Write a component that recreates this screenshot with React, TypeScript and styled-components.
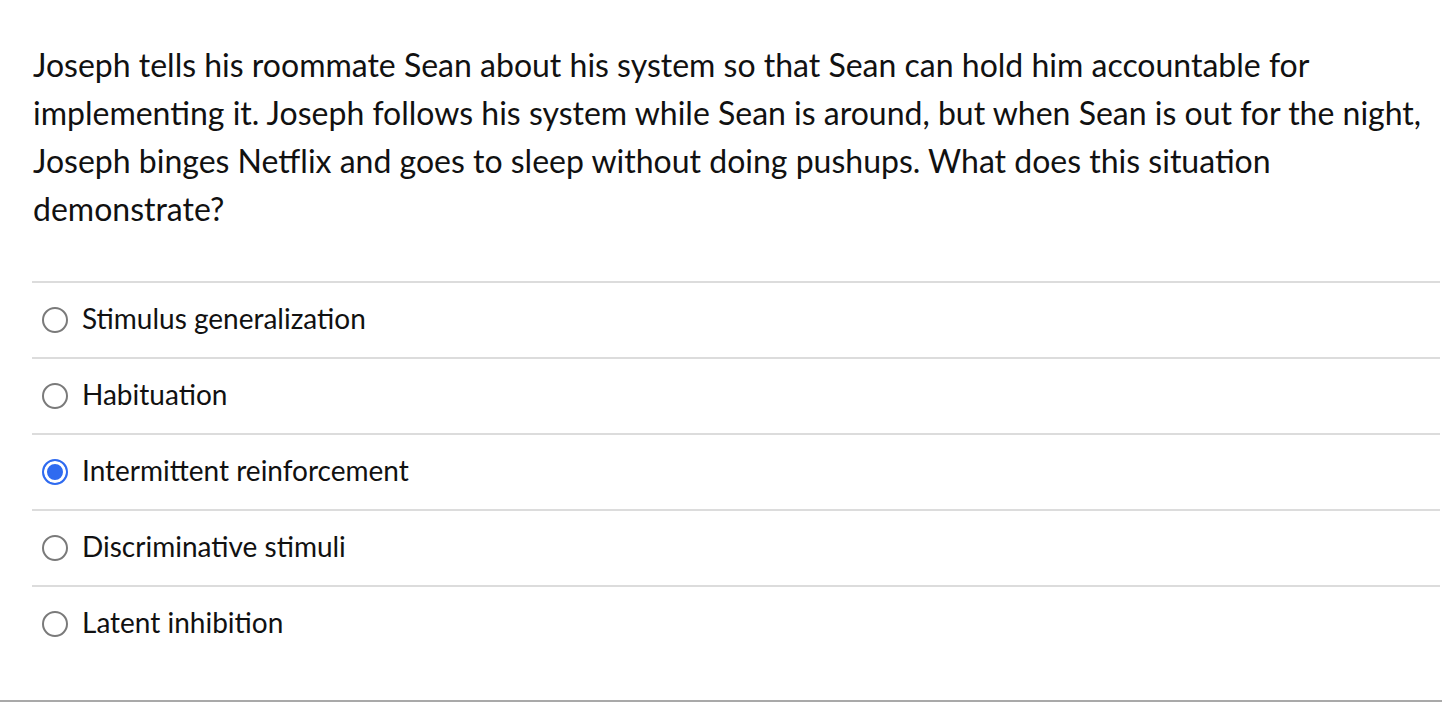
import { createGlobalStyle } from 'styled-components';
import styled from 'styled-components';
import { useState } from 'react';

const GlobalStyle = createGlobalStyle`
  html, body {
    margin: 0;
    padding: 0;
    background: #fff;
  }
  body {
    font-family: Lato, 'Noto Sans', sans-serif;
    color: #111;
  }
`;

const options = [
  'Stimulus generalization',
  'Habituation',
  'Intermittent reinforcement',
  'Discriminative stimuli',
  'Latent inhibition',
];

export default function App() {
  const [selected, setSelected] = useState(2);

  return (
    <>
      <GlobalStyle />
      <StyledPage>
        <StyledQuestion>
          Joseph tells his roommate Sean about his system so that Sean can hold him accountable for
          implementing it. Joseph follows his system while Sean is around, but when Sean is out for
          the night, Joseph binges Netflix and goes to sleep without doing pushups. What does this
          situation demonstrate?
        </StyledQuestion>
        <StyledAnswers>
          {options.map((label, index) => (
            <StyledAnswer key={label} onClick={() => setSelected(index)}>
              <StyledRadio $checked={index === selected} />
              <StyledLabel>{label}</StyledLabel>
            </StyledAnswer>
          ))}
        </StyledAnswers>
      </StyledPage>
    </>
  );
}

const StyledPage = styled.div`
  height: 702px;
  box-sizing: border-box;
  padding: 41px 2px 0 32px;
  border-bottom: 2px solid #a9a9a9;
`;

const StyledQuestion = styled.p`
  margin: 0 0 48px;
  padding-left: 1px;
  font-size: 32px;
  line-height: 48px;
  color: #111;
`;

const StyledAnswers = styled.div`
  display: flex;
  flex-direction: column;
`;

const StyledAnswer = styled.label`
  display: flex;
  align-items: center;
  gap: 14px;
  height: 74px;
  padding-left: 10px;
  border-top: 2px solid #dcdcdc;
  font-size: 28px;
  color: #111;
  cursor: pointer;
`;

const StyledLabel = styled.span`
  margin-bottom: 4px;
`;

interface StyledRadioProps {
  $checked: boolean;
}

const StyledRadio = styled.span<StyledRadioProps>`
  flex: none;
  width: 26px;
  height: 26px;
  box-sizing: border-box;
  border-radius: 50%;
  border: 2px solid ${(props) => (props.$checked ? '#2f6bf0' : '#7a7a7a')};
  background: ${(props) => (props.$checked ? '#2f6bf0' : '#fff')};
  box-shadow: ${(props) => (props.$checked ? 'inset 0 0 0 3px #fff' : 'none')};
  margin-bottom: 1px;
`;
